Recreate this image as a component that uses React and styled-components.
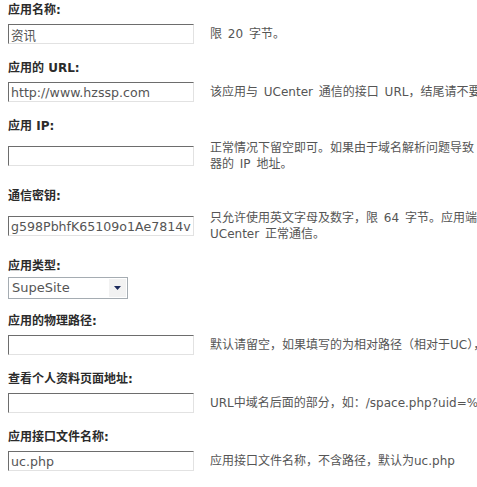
import React from 'react';
import styled, { createGlobalStyle } from 'styled-components';

const GlobalStyle = createGlobalStyle`
  html, body {
    margin: 0;
    padding: 0;
    background: #ffffff;
    overflow: hidden;
  }
`;

const Page = styled.div`
  padding: 0 0 0 8px;
  width: 469px;
  overflow: hidden;
  font-family: "DejaVu Sans", "Noto Sans CJK SC", sans-serif;
`;

const Section = styled.div`
  padding-bottom: ${props => props.tight ? '12px' : '14px'};
`;

const Label = styled.div`
  padding-top: 1px;
  margin-bottom: ${props => props.tight ? '2px' : '5px'};
  line-height: 18px;
  font-size: 12px;
  font-weight: 700;
  color: #2b2b2b;
  white-space: nowrap;
`;

const FieldRow = styled.div`
  display: flex;
  align-items: center;
  gap: 16px;
  min-height: 20px;
`;

const TextInput = styled.input`
  box-sizing: border-box;
  flex: 0 0 186px;
  width: 186px;
  height: 20px;
  margin: 0;
  padding: 0 2px;
  border: 1px solid;
  border-color: #6d6d6d #e2e2e2 #e2e2e2 #6d6d6d;
  background: #ffffff;
  color: #555555;
  font-family: "DejaVu Sans", "Noto Sans CJK SC", sans-serif;
  font-size: 12.6px;
  outline: none;
`;

const SelectBox = styled.div`
  box-sizing: border-box;
  display: flex;
  align-items: stretch;
  width: 120px;
  height: 22px;
  border: 1px solid #a5acb2;
  background: #ffffff;
`;

const SelectValue = styled.span`
  flex: 1;
  padding-left: 3px;
  line-height: 20px;
  color: #555555;
  font-family: "DejaVu Sans", sans-serif;
  font-size: 13px;
`;

const SelectArrow = styled.span`
  display: flex;
  align-items: center;
  justify-content: center;
  width: 17px;
  margin: 1px;
  background: #f2f2f2;
`;

const Desc = styled.div`
  font-size: 12px;
  line-height: 16px;
  word-spacing: 2px;
  color: #555555;
`;

const DescLine = styled.div`
  white-space: nowrap;
`;

const fields = [
  { label: '应用名称:', value: '资讯', desc: ['限 20 字节。'] },
  { label: '应用的 URL:', value: 'http://www.hzssp.com', desc: ['该应用与 UCenter 通信的接口 URL，结尾请不要加“/”，应用的通知只发送给主 URL 地址'] },
  { label: '应用 IP:', value: '', desc: ['正常情况下留空即可。如果由于域名解析问题导致 UCenter 与该应用通信失败，请尝试设置为该应用所在服务', '器的 IP 地址。'] },
  { label: '通信密钥:', value: 'g598PbhfK65109o1Ae7814v3a4f2', desc: ['只允许使用英文字母及数字，限 64 字节。应用端的此设置必须与 UCenter 设置保持一致，否则该应用将无法与', 'UCenter 正常通信。'] },
  { label: '应用类型:', select: 'SupeSite' },
  { label: '应用的物理路径:', value: '', desc: ['默认请留空，如果填写的为相对路径（相对于UC），程序会自动转换为绝对路径，如 ../'] },
  { label: '查看个人资料页面地址:', value: '', desc: ['URL中域名后面的部分，如：/space.php?uid=%s 其中 %s 代表 uid'] },
  { label: '应用接口文件名称:', value: 'uc.php', desc: ['应用接口文件名称，不含路径，默认为uc.php'] },
];

const Arrow = () => (
  <svg width="7" height="4" viewBox="0 0 7 4">
    <path d="M0 0 H7 L3.5 4 Z" fill="#1c2a5c" />
  </svg>
);

const App = () => (
  <>
    <GlobalStyle />
    <Page>
      {fields.map(field => (
        <Section key={field.label} tight={field.select ? true : undefined}>
          <Label tight={field.select ? true : undefined}>{field.label}</Label>
          <FieldRow>
            {field.select ? (
              <SelectBox>
                <SelectValue>{field.select}</SelectValue>
                <SelectArrow><Arrow /></SelectArrow>
              </SelectBox>
            ) : (
              <>
                <TextInput type="text" defaultValue={field.value} />
                <Desc>
                  {field.desc.map(line => <DescLine key={line}>{line}</DescLine>)}
                </Desc>
              </>
            )}
          </FieldRow>
        </Section>
      ))}
    </Page>
  </>
);

export default App;
